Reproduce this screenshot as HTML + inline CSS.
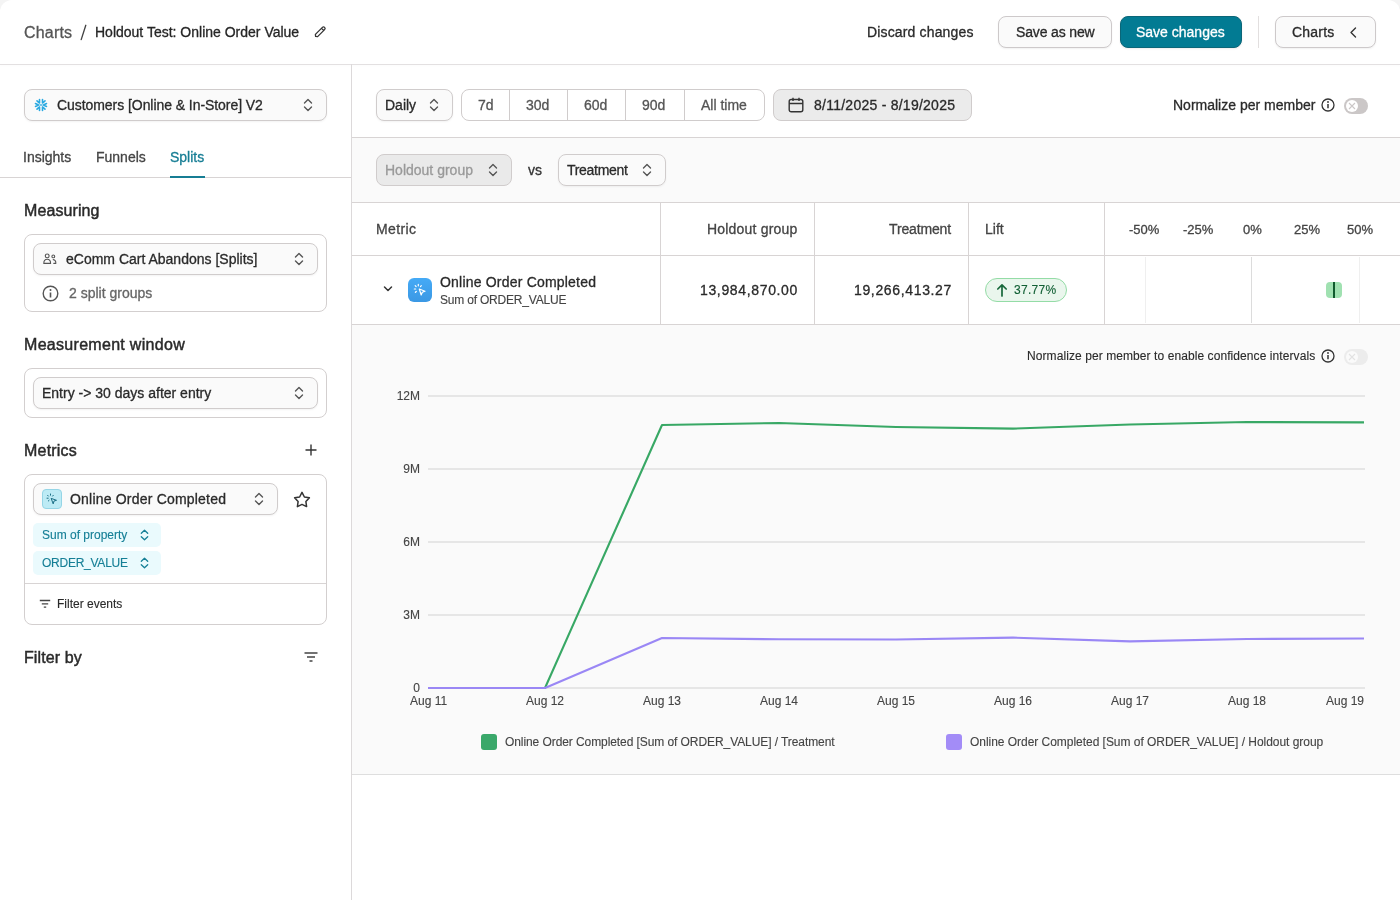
<!DOCTYPE html>
<html><head><meta charset="utf-8">
<style>
*{box-sizing:border-box;margin:0;padding:0}
html,body{width:1400px;height:900px;overflow:hidden;background:#f4f4f4}
body{font-family:"Liberation Sans",sans-serif;color:#2a2a2a;position:relative}
.page{will-change:transform;position:absolute;left:0;top:0;width:1400px;height:900px;background:#fff;border-radius:12px 12px 0 0;overflow:hidden}
.a{position:absolute}
.t{position:absolute;white-space:nowrap;line-height:1;-webkit-text-stroke:0.3px currentColor}
.hd{-webkit-text-stroke:0.45px currentColor}
.sm{-webkit-text-stroke:0.12px currentColor}
.box{position:absolute;border:1px solid #d3cfcf;border-radius:8px}
.dd{position:absolute;border:1px solid #d0cccc;border-radius:8px;background:#fafafa;box-shadow:0 1px 2px rgba(0,0,0,0.05)}
.btn{position:absolute;border:1px solid #cdc9ca;border-radius:8px;background:#fafafa;box-shadow:0 1px 2px rgba(0,0,0,0.06)}
svg{position:absolute;overflow:visible}
.hl{position:absolute;height:1px;background:#d8d4d4}
.vl{position:absolute;width:1px;background:#d8d4d4}
</style></head><body>
<div class="page">

<!-- HEADER -->
<div class="t" style="left:24px;top:25px;font-size:16px;color:#555;letter-spacing:0.2px">Charts</div>
<svg style="left:78px;top:22px" width="12" height="20" viewBox="0 0 12 20"><path d="M7.8 3.3 L3.2 17.6" stroke="#444" stroke-width="1.35" stroke-linecap="round"/></svg>
<div class="t" style="left:95px;top:25px;font-size:14px;color:#262626">Holdout Test: Online Order Value</div>
<svg style="left:313px;top:25px" width="14" height="14" viewBox="0 0 14 14"><path d="M2.6 11.4 L2.4 9.4 L9.4 2.4 A1.3 1.3 0 0 1 11.6 4.6 L4.6 11.6 Z M8.6 3.4 L10.6 5.4" fill="none" stroke="#333" stroke-width="1.3" stroke-linejoin="round"/></svg>

<div class="t" style="left:867px;top:25px;font-size:14px;color:#2a2a2a;letter-spacing:0.15px">Discard changes</div>
<div class="btn" style="left:998px;top:16px;width:114px;height:32px"></div>
<div class="t" style="left:1016px;top:25px;font-size:14px;color:#2a2a2a;letter-spacing:-0.15px">Save as new</div>
<div class="a" style="left:1120px;top:16px;width:122px;height:32px;background:#027b93;border:1px solid #0b6678;border-radius:8px;box-shadow:0 1px 2px rgba(0,0,0,0.08)"></div>
<div class="t" style="left:1136px;top:25px;font-size:14px;color:#fff">Save changes</div>
<div class="vl" style="left:1258px;top:16px;height:32px;background:#e2dfdf"></div>
<div class="btn" style="left:1275px;top:16px;width:101px;height:32px"></div>
<div class="t" style="left:1292px;top:25px;font-size:14px;color:#2a2a2a;letter-spacing:0.2px">Charts</div>
<svg style="left:1349px;top:27px" width="9" height="11" viewBox="0 0 9 11"><path d="M6.5 1 L2 5.5 L6.5 10" fill="none" stroke="#333" stroke-width="1.4" stroke-linecap="round" stroke-linejoin="round"/></svg>

<div class="hl" style="left:0;top:64px;width:1400px;background:#e3e0e1;box-shadow:0 1px 3px rgba(0,0,0,0.03)"></div>

<!-- SIDEBAR -->
<div class="vl" style="left:351px;top:64px;height:836px;background:#dcd9da"></div>

<div class="dd" style="left:24px;top:89px;width:303px;height:32px"></div>
<svg style="left:34px;top:98px" width="14" height="14" viewBox="0 0 14 14"><g stroke="#29a9e1" stroke-width="1.6" stroke-linecap="round" fill="none"><path d="M5.5 1.5 V5 M8.5 1.5 V5 M5.5 12.5 V9 M8.5 12.5 V9 M1.5 5.5 L4.5 7 L1.5 8.5 M12.5 5.5 L9.5 7 L12.5 8.5 M3 2.8 L5.3 5 M11 2.8 L8.7 5 M3 11.2 L5.3 9 M11 11.2 L8.7 9"/></g><rect x="6.2" y="6.2" width="1.6" height="1.6" fill="#29a9e1"/></svg>
<div class="t" style="left:57px;top:98px;font-size:14px;color:#2a2a2a;letter-spacing:-0.06px">Customers [Online &amp; In-Store] V2</div>
<svg class="ud" style="left:303px;top:98px" width="10" height="14" viewBox="0 0 10 14"><path d="M1.5 5 L5 1.5 L8.5 5 M1.5 9 L5 12.5 L8.5 9" fill="none" stroke="#555" stroke-width="1.4" stroke-linecap="round" stroke-linejoin="round"/></svg>

<div class="t" style="left:23px;top:150px;font-size:14px;color:#444">Insights</div>
<div class="t" style="left:96px;top:150px;font-size:14px;color:#444">Funnels</div>
<div class="t" style="left:170px;top:150px;font-size:14px;color:#167d94">Splits</div>
<div class="hl" style="left:0;top:177px;width:351px"></div>
<div class="a" style="left:170px;top:176px;width:35px;height:2px;background:#167d94"></div>

<div class="t hd" style="left:24px;top:203px;font-size:16px;color:#2a2a2a;letter-spacing:0.1px">Measuring</div>
<div class="box" style="left:24px;top:234px;width:303px;height:78px"></div>
<div class="dd" style="left:33px;top:243px;width:285px;height:32px"></div>
<svg style="left:43px;top:253px" width="14" height="12" viewBox="0 0 14 12"><g fill="none" stroke="#555" stroke-width="1.1" stroke-linecap="round" stroke-linejoin="round"><circle cx="4.2" cy="2.9" r="1.9"/><path d="M0.8 10.4 C0.8 7.6 2.5 6.3 4.2 6.3 C5.9 6.3 7.6 7.6 7.6 10.4 Z"/><circle cx="10.3" cy="3.4" r="1.4"/><path d="M10.2 6.6 C12 6.9 13 8.3 12.8 10.4 L10.8 10.4"/></g></svg>
<div class="t" style="left:66px;top:252px;font-size:14px;color:#2a2a2a">eComm Cart Abandons [Splits]</div>
<svg style="left:294px;top:252px" width="10" height="14" viewBox="0 0 10 14"><path d="M1.5 5 L5 1.5 L8.5 5 M1.5 9 L5 12.5 L8.5 9" fill="none" stroke="#555" stroke-width="1.4" stroke-linecap="round" stroke-linejoin="round"/></svg>
<svg style="left:42px;top:285px" width="17" height="17" viewBox="0 0 17 17"><circle cx="8.5" cy="8.5" r="7.3" fill="none" stroke="#555" stroke-width="1.4"/><path d="M8.5 7.5 V12.5" stroke="#555" stroke-width="1.6"/><circle cx="8.5" cy="5" r="1" fill="#555"/></svg>
<div class="t" style="left:69px;top:286px;font-size:14px;color:#666">2 split groups</div>

<div class="t hd" style="left:24px;top:337px;font-size:16px;color:#2a2a2a;letter-spacing:0.3px">Measurement window</div>
<div class="box" style="left:24px;top:368px;width:303px;height:50px"></div>
<div class="dd" style="left:33px;top:377px;width:285px;height:32px"></div>
<div class="t" style="left:42px;top:386px;font-size:14px;color:#2a2a2a">Entry -&gt; 30 days after entry</div>
<svg style="left:294px;top:386px" width="10" height="14" viewBox="0 0 10 14"><path d="M1.5 5 L5 1.5 L8.5 5 M1.5 9 L5 12.5 L8.5 9" fill="none" stroke="#555" stroke-width="1.4" stroke-linecap="round" stroke-linejoin="round"/></svg>

<div class="t hd" style="left:24px;top:443px;font-size:16px;color:#2a2a2a;letter-spacing:0.2px">Metrics</div>
<svg style="left:305px;top:444px" width="12" height="12" viewBox="0 0 12 12"><path d="M6 0.5 V11.5 M0.5 6 H11.5" stroke="#333" stroke-width="1.4"/></svg>

<div class="box" style="left:24px;top:474px;width:303px;height:151px"></div>
<div class="dd" style="left:33px;top:483px;width:245px;height:32px"></div>
<div class="a" style="left:42px;top:489px;width:20px;height:20px;background:#bdebf5;border:1px solid #95d5e6;border-radius:4px"></div>
<svg style="left:46px;top:493px" width="12" height="12" viewBox="0 0 12 12"><g stroke="#1b6f86" stroke-width="1" fill="none" stroke-linecap="round"><path d="M5.5 5.5 L10.5 7.3 L8 8 L7.3 10.5 Z"/><path d="M4.5 1 V2.2 M1.6 2.3 L2.4 3.1 M1 5.2 H2.2 M2.3 8 L3.1 7.3 M7.3 2.3 L6.6 3.1"/></g></svg>
<div class="t" style="left:70px;top:492px;font-size:14px;color:#2a2a2a;letter-spacing:0.2px">Online Order Completed</div>
<svg style="left:254px;top:492px" width="10" height="14" viewBox="0 0 10 14"><path d="M1.5 5 L5 1.5 L8.5 5 M1.5 9 L5 12.5 L8.5 9" fill="none" stroke="#555" stroke-width="1.4" stroke-linecap="round" stroke-linejoin="round"/></svg>
<svg style="left:292px;top:490px" width="20" height="18" viewBox="0 0 20 18"><path d="M10 2.4 L12.4 7 L17.4 7.8 L13.9 11.6 L14.6 16.6 L10 14.4 L5.4 16.6 L6.1 11.6 L2.6 7.8 L7.6 7 Z" fill="none" stroke="#333" stroke-width="1.5" stroke-linejoin="round"/></svg>

<div class="a" style="left:33px;top:523px;width:128px;height:24px;background:#eafafd;border-radius:5px"></div>
<div class="t sm" style="left:42px;top:529px;font-size:12px;color:#157f96">Sum of property</div>
<svg style="left:140px;top:529px" width="9" height="12" viewBox="0 0 9 12"><path d="M1.3 4.3 L4.5 1.3 L7.7 4.3 M1.3 7.7 L4.5 10.7 L7.7 7.7" fill="none" stroke="#157f96" stroke-width="1.3" stroke-linecap="round" stroke-linejoin="round"/></svg>
<div class="a" style="left:33px;top:551px;width:128px;height:24px;background:#eafafd;border-radius:5px"></div>
<div class="t sm" style="left:42px;top:557px;font-size:12px;color:#157f96;letter-spacing:-0.25px">ORDER_VALUE</div>
<svg style="left:140px;top:557px" width="9" height="12" viewBox="0 0 9 12"><path d="M1.3 4.3 L4.5 1.3 L7.7 4.3 M1.3 7.7 L4.5 10.7 L7.7 7.7" fill="none" stroke="#157f96" stroke-width="1.3" stroke-linecap="round" stroke-linejoin="round"/></svg>
<div class="hl" style="left:25px;top:583px;width:301px"></div>
<svg style="left:39px;top:599px" width="12" height="10" viewBox="0 0 12 10"><path d="M0.8 1.5 H11.2 M2.8 4.8 H9.2 M4.8 8.2 H7.2" stroke="#444" stroke-width="1.3"/></svg>
<div class="t sm" style="left:57px;top:598px;font-size:12px;color:#2a2a2a">Filter events</div>

<div class="t hd" style="left:24px;top:650px;font-size:16px;color:#2a2a2a;letter-spacing:0.1px">Filter by</div>
<svg style="left:304px;top:652px" width="14" height="10" viewBox="0 0 14 10"><path d="M0.5 1 H13.5 M3 5 H11 M5.5 9 H8.5" stroke="#444" stroke-width="1.4"/></svg>

<!-- MAIN TOOLBAR -->
<div class="dd" style="left:376px;top:89px;width:77px;height:32px"></div>
<div class="t" style="left:385px;top:98px;font-size:14px;color:#2a2a2a">Daily</div>
<svg style="left:429px;top:98px" width="10" height="14" viewBox="0 0 10 14"><path d="M1.5 5 L5 1.5 L8.5 5 M1.5 9 L5 12.5 L8.5 9" fill="none" stroke="#555" stroke-width="1.4" stroke-linecap="round" stroke-linejoin="round"/></svg>

<div class="a" style="left:461px;top:89px;width:304px;height:32px;border:1px solid #d0cccc;border-radius:8px;background:#fff"></div>
<div class="vl" style="left:509px;top:90px;height:30px;background:#d0cccc"></div>
<div class="vl" style="left:567px;top:90px;height:30px;background:#d0cccc"></div>
<div class="vl" style="left:625px;top:90px;height:30px;background:#d0cccc"></div>
<div class="vl" style="left:684px;top:90px;height:30px;background:#d0cccc"></div>
<div class="t" style="left:478px;top:98px;font-size:14px;color:#555">7d</div>
<div class="t" style="left:526px;top:98px;font-size:14px;color:#555">30d</div>
<div class="t" style="left:584px;top:98px;font-size:14px;color:#555">60d</div>
<div class="t" style="left:642px;top:98px;font-size:14px;color:#555">90d</div>
<div class="t" style="left:701px;top:98px;font-size:14px;color:#555">All time</div>

<div class="a" style="left:773px;top:89px;width:199px;height:32px;border:1px solid #d0cccc;border-radius:8px;background:#ebebeb"></div>
<svg style="left:788px;top:97px" width="16" height="16" viewBox="0 0 16 16"><g fill="none" stroke="#333" stroke-width="1.4"><rect x="1.2" y="2.5" width="13.6" height="12.3" rx="2"/><path d="M1.2 6.5 H14.8 M5 0.8 V4 M11 0.8 V4"/></g></svg>
<div class="t" style="left:814px;top:98px;font-size:14px;color:#2a2a2a;letter-spacing:0.25px">8/11/2025 - 8/19/2025</div>

<div class="t" style="left:1173px;top:98px;font-size:14px;color:#2a2a2a">Normalize per member</div>
<svg style="left:1321px;top:98px" width="14" height="14" viewBox="0 0 14 14"><circle cx="7" cy="7" r="6" fill="none" stroke="#333" stroke-width="1.3"/><path d="M7 6 V10.3" stroke="#333" stroke-width="1.5"/><circle cx="7" cy="4" r="0.9" fill="#333"/></svg>
<div class="a" style="left:1344px;top:98px;width:24px;height:16px;border-radius:8px;background:#cbc7c7"></div>
<div class="a" style="left:1346px;top:100px;width:12px;height:12px;border-radius:6px;background:#fff"></div>
<svg style="left:1348px;top:102px" width="8" height="8" viewBox="0 0 8 8"><path d="M1 1 L7 7 M7 1 L1 7" stroke="#cbc7c7" stroke-width="1.1"/></svg>

<div class="hl" style="left:352px;top:137px;width:1048px"></div>

<!-- COMPARE BAR -->
<div class="a" style="left:352px;top:138px;width:1048px;height:64px;background:#fafafa"></div>
<div class="a" style="left:376px;top:154px;width:136px;height:32px;border:1px solid #d0cccc;border-radius:8px;background:#eaeaea"></div>
<div class="t" style="left:385px;top:163px;font-size:14px;color:#999">Holdout group</div>
<svg style="left:488px;top:163px" width="10" height="14" viewBox="0 0 10 14"><path d="M1.5 5 L5 1.5 L8.5 5 M1.5 9 L5 12.5 L8.5 9" fill="none" stroke="#555" stroke-width="1.4" stroke-linecap="round" stroke-linejoin="round"/></svg>
<div class="t" style="left:528px;top:163px;font-size:14px;color:#333">vs</div>
<div class="dd" style="left:558px;top:154px;width:108px;height:32px"></div>
<div class="t" style="left:567px;top:163px;font-size:14px;color:#2a2a2a;letter-spacing:-0.3px">Treatment</div>
<svg style="left:642px;top:163px" width="10" height="14" viewBox="0 0 10 14"><path d="M1.5 5 L5 1.5 L8.5 5 M1.5 9 L5 12.5 L8.5 9" fill="none" stroke="#555" stroke-width="1.4" stroke-linecap="round" stroke-linejoin="round"/></svg>
<div class="hl" style="left:352px;top:202px;width:1048px"></div>

<!-- TABLE -->
<div class="vl" style="left:660px;top:203px;height:121px"></div>
<div class="vl" style="left:814px;top:203px;height:121px"></div>
<div class="vl" style="left:968px;top:203px;height:121px"></div>
<div class="vl" style="left:1104px;top:203px;height:121px"></div>
<div class="hl" style="left:352px;top:255px;width:1048px"></div>
<div class="hl" style="left:352px;top:324px;width:1048px"></div>

<div class="t" style="left:376px;top:222px;font-size:14px;color:#444;letter-spacing:0.4px">Metric</div>
<div class="t" style="left:707px;top:222px;font-size:14px;color:#444;letter-spacing:0.2px">Holdout group</div>
<div class="t" style="left:889px;top:222px;font-size:14px;color:#444;letter-spacing:-0.15px">Treatment</div>
<div class="t" style="left:985px;top:222px;font-size:14px;color:#444">Lift</div>
<div class="t" style="left:1129px;top:223px;font-size:13px;color:#444">-50%</div>
<div class="t" style="left:1183px;top:223px;font-size:13px;color:#444">-25%</div>
<div class="t" style="left:1243px;top:223px;font-size:13px;color:#444">0%</div>
<div class="t" style="left:1294px;top:223px;font-size:13px;color:#444">25%</div>
<div class="t" style="left:1347px;top:223px;font-size:13px;color:#444">50%</div>

<svg style="left:383px;top:285px" width="10" height="8" viewBox="0 0 10 8"><path d="M1.5 2 L5 5.5 L8.5 2" fill="none" stroke="#333" stroke-width="1.5" stroke-linecap="round" stroke-linejoin="round"/></svg>
<div class="a" style="left:408px;top:278px;width:24px;height:24px;background:linear-gradient(#45aaf6,#3b98e4);border-radius:6px"></div>
<svg style="left:413px;top:283px" width="14" height="14" viewBox="0 0 14 14"><g stroke="#fff" stroke-width="1.2" fill="none" stroke-linecap="round" stroke-linejoin="round"><path d="M6.3 6 L12 8.2 L9.3 9.2 L8.2 12 Z"/><path d="M5.3 1.4 V2.8 M2.2 2.6 L3.1 3.5 M1.3 6 H2.7 M2.4 9.3 L3.3 8.5 M8.3 2.7 L7.5 3.6"/></g></svg>
<div class="t" style="left:440px;top:275px;font-size:14px;color:#2a2a2a;letter-spacing:0.2px">Online Order Completed</div>
<div class="t sm" style="left:440px;top:294px;font-size:12px;color:#444;letter-spacing:-0.2px">Sum of ORDER_VALUE</div>

<div class="t" style="left:700px;top:283px;font-size:14px;color:#2a2a2a;letter-spacing:0.65px">13,984,870.00</div>
<div class="t" style="left:854px;top:283px;font-size:14px;color:#2a2a2a;letter-spacing:0.65px">19,266,413.27</div>

<div class="a" style="left:985px;top:278px;width:82px;height:24px;border-radius:12px;background:#eaf6ed;border:1px solid #94dca6"></div>
<svg style="left:996px;top:283px" width="12" height="14" viewBox="0 0 12 14"><path d="M6 13 V1.8 M1.8 6 L6 1.8 L10.2 6" fill="none" stroke="#17683a" stroke-width="1.7" stroke-linecap="round" stroke-linejoin="round"/></svg>
<div class="t sm" style="left:1014px;top:284px;font-size:12px;color:#115f34;letter-spacing:0.3px">37.77%</div>

<div class="vl" style="left:1145px;top:257px;height:66px;background:#efefef"></div>
<div class="vl" style="left:1251px;top:257px;height:66px;background:#dcdcdc"></div>
<div class="vl" style="left:1359px;top:257px;height:66px;background:#efefef"></div>
<div class="a" style="left:1326px;top:282px;width:16px;height:16px;border-radius:4px;background:#a0e1b1"></div>
<div class="a" style="left:1333px;top:282px;width:2px;height:16px;background:#0f5a2d"></div>

<!-- CHART AREA -->
<div class="a" style="left:352px;top:325px;width:1048px;height:449px;background:#fafafa"></div>
<div class="hl" style="left:352px;top:774px;width:1048px;background:#dedede"></div>

<div class="t sm" style="left:1027px;top:350px;font-size:12px;color:#2a2a2a;letter-spacing:0.08px">Normalize per member to enable confidence intervals</div>
<svg style="left:1321px;top:349px" width="14" height="14" viewBox="0 0 14 14"><circle cx="7" cy="7" r="6" fill="none" stroke="#333" stroke-width="1.3"/><path d="M7 6 V10.3" stroke="#333" stroke-width="1.5"/><circle cx="7" cy="4" r="0.9" fill="#333"/></svg>
<div class="a" style="left:1344px;top:349px;width:24px;height:16px;border-radius:8px;background:#ececec"></div>
<div class="a" style="left:1346px;top:351px;width:12px;height:12px;border-radius:6px;background:#fafafa"></div>
<svg style="left:1348px;top:353px" width="8" height="8" viewBox="0 0 8 8"><path d="M1 1 L7 7 M7 1 L1 7" stroke="#e2e2e2" stroke-width="1.1"/></svg>

<svg style="left:0;top:0" width="1400" height="900" viewBox="0 0 1400 900">
  <g stroke="#e6e6e6" stroke-width="2">
    <path d="M428 396 H1365 M428 469 H1365 M428 542 H1365 M428 615 H1365 M428 688 H1365"/>
  </g>
  <path d="M428 688 L545 688 L662 425 L779 423 L896 427 L1013 428.6 L1130 424.5 L1247 422 L1364 422.4" fill="none" stroke="#38a865" stroke-width="2.1" stroke-linejoin="round"/>
  <path d="M428 688 L545 688 L662 638 L779 639.3 L896 639.5 L1013 637.6 L1130 641.4 L1247 639 L1364 638.5" fill="none" stroke="#9a87f5" stroke-width="2.1" stroke-linejoin="round"/>
</svg>

<div class="t sm" style="right:980px;top:390px;font-size:12px;color:#444;text-align:right">12M</div>
<div class="t sm" style="right:980px;top:463px;font-size:12px;color:#444;text-align:right">9M</div>
<div class="t sm" style="right:980px;top:536px;font-size:12px;color:#444;text-align:right">6M</div>
<div class="t sm" style="right:980px;top:609px;font-size:12px;color:#444;text-align:right">3M</div>
<div class="t sm" style="right:980px;top:682px;font-size:12px;color:#444;text-align:right">0</div>

<div class="t sm" style="left:410px;top:695px;font-size:12px;color:#444">Aug 11</div>
<div class="t sm" style="left:526px;top:695px;font-size:12px;color:#444">Aug 12</div>
<div class="t sm" style="left:643px;top:695px;font-size:12px;color:#444">Aug 13</div>
<div class="t sm" style="left:760px;top:695px;font-size:12px;color:#444">Aug 14</div>
<div class="t sm" style="left:877px;top:695px;font-size:12px;color:#444">Aug 15</div>
<div class="t sm" style="left:994px;top:695px;font-size:12px;color:#444">Aug 16</div>
<div class="t sm" style="left:1111px;top:695px;font-size:12px;color:#444">Aug 17</div>
<div class="t sm" style="left:1228px;top:695px;font-size:12px;color:#444">Aug 18</div>
<div class="t sm" style="left:1326px;top:695px;font-size:12px;color:#444">Aug 19</div>

<div class="a" style="left:481px;top:734px;width:16px;height:16px;border-radius:3px;background:#3aa86a"></div>
<div class="t sm" style="left:505px;top:736px;font-size:12px;color:#444;letter-spacing:-0.08px">Online Order Completed [Sum of ORDER_VALUE] / Treatment</div>
<div class="a" style="left:946px;top:734px;width:16px;height:16px;border-radius:3px;background:#a38cf7"></div>
<div class="t sm" style="left:970px;top:736px;font-size:12px;color:#444;letter-spacing:-0.035px">Online Order Completed [Sum of ORDER_VALUE] / Holdout group</div>

</div>
</body></html>
